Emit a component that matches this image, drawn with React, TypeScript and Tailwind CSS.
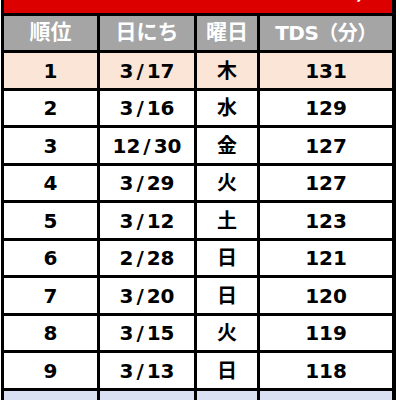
const rows: Array<[string, string, string, string]> = [
  ["1", "3/17", "木", "131"],
  ["2", "3/16", "水", "129"],
  ["3", "12/30", "金", "127"],
  ["4", "3/29", "火", "127"],
  ["5", "3/12", "土", "123"],
  ["6", "2/28", "日", "121"],
  ["7", "3/20", "日", "120"],
  ["8", "3/15", "火", "119"],
  ["9", "3/13", "日", "118"],
];

const heights = ["h-[35px]", "h-[34px]"];

function DateText({ value }: { value: string }) {
  const [m, d] = value.split("/");
  return (
    <span>
      {m}
      <span className="mx-[3px]">/</span>
      {d}
    </span>
  );
}

export default function App() {
  const font = { fontFamily: '"DejaVu Sans", "Noto Sans CJK JP", sans-serif' };
  return (
    <div className="h-[400px] w-[400px] overflow-hidden bg-white" style={font}>
      <div className="ml-[1px] grid w-[395px] grid-cols-[93px_94px_60px_132px] gap-[3px] bg-black px-[3px] text-[20px] font-bold">
        <div className="col-span-4 flex h-[13px] justify-end overflow-hidden bg-[#dd0000] pr-[16px]">
          <span className="-mt-[19px] text-[20px] leading-[24px] text-white">）</span>
        </div>
        {["順位", "日にち", "曜日", "TDS（分）"].map((h) => (
          <div
            key={h}
            className={`flex h-[34px] items-center justify-center bg-[#a5a5a5] text-white ${
              h.startsWith("TDS") ? "text-[20px] tracking-[-0.5px]" : "text-[21px]"
            }`}
          >
            {h}
          </div>
        ))}
        {rows.map((r, i) => {
          const bg = i === 0 ? "bg-[#fbe5d6]" : "bg-white";
          const h = heights[i % 2];
          return r.map((cell, j) => (
            <div key={`${i}-${j}`} className={`${h} ${bg} flex items-center justify-center text-black`}>
              {j === 1 ? <DateText value={cell} /> : cell}
            </div>
          ));
        })}
        {[0, 1, 2, 3].map((j) => (
          <div key={`b${j}`} className="h-[20px] bg-[#dae0f3]" />
        ))}
      </div>
    </div>
  );
}
